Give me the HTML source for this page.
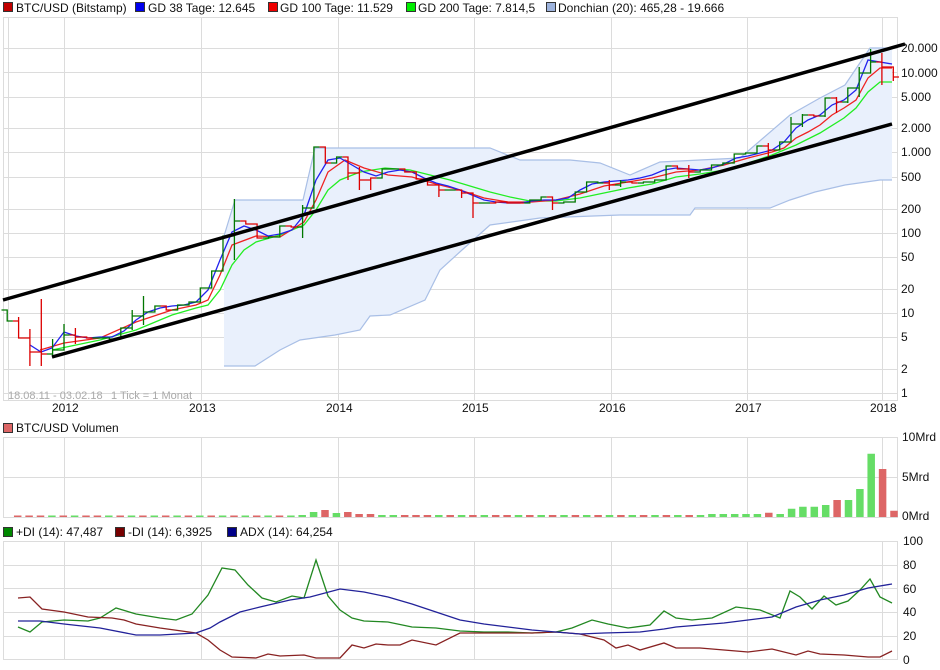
<!DOCTYPE html>
<html><head><meta charset="utf-8"><style>
html,body{margin:0;padding:0;background:#fff;}
svg{display:block;font-family:"Liberation Sans",sans-serif;}
</style></head><body>
<svg width="940" height="670" viewBox="0 0 940 670" xmlns="http://www.w3.org/2000/svg">
<rect width="940" height="670" fill="#fff"/>
<g font-size="12" fill="#111">
<rect x="3.5" y="2.5" width="9" height="9" fill="#c00000" stroke="#333"/><text x="16" y="12">BTC/USD (Bitstamp)</text>
<rect x="135.5" y="2.5" width="9" height="9" fill="#0000ee" stroke="#333"/><text x="148" y="12">GD 38 Tage: 12.645</text>
<rect x="268.5" y="2.5" width="9" height="9" fill="#ee0000" stroke="#333"/><text x="280" y="12">GD 100 Tage: 11.529</text>
<rect x="406.5" y="2.5" width="9" height="9" fill="#00ee00" stroke="#333"/><text x="418" y="12">GD 200 Tage: 7.814,5</text>
<rect x="546.5" y="2.5" width="9" height="9" fill="#9db3dd" stroke="#333"/><text x="558" y="12">Donchian (20): 465,28 - 19.666</text>
</g>
<g stroke="#dcdcdc" stroke-width="1">
<path d="M3 17.5H898M3 48.5H898M3 72.5H898M3 97.5H898M3 128.5H898M3 152.5H898M3 177.5H898M3 209.5H898M3 233.5H898M3 257.5H898M3 289.5H898M3 313.5H898M3 337.5H898M3 369.5H898M3 393.5H898M3 400.5H898"/>
<path d="M3.5 17V400M8.5 17V400M64.5 17V400M201.5 17V400M338.5 17V400M474.5 17V400M611.5 17V400M747.5 17V400M882.5 17V400M897.5 17V400"/>
</g>
<path d="M224 236L235 200L303 200L315 148L490 148L520 160L570 160L600 163L630 175L660 162L740 158L790 115L820 98L845 85L870 48L892 48L892 180L880 180L845 185L815 192L790 200L770 208L695 208L690 215L620 215L540 218L490 225L462 250L440 270L425 300L390 315L370 316L360 330L335 335L300 340L280 350L255 366L224 366Z" fill="#e9f0fc" stroke="none"/>
<path d="M224 236L235 200L303 200L315 148L490 148L520 160L570 160L600 163L630 175L660 162L740 158L790 115L820 98L845 85L870 48L892 48" fill="none" stroke="#a9bfe6" stroke-width="1.2"/>
<path d="M892 180L880 180L845 185L815 192L790 200L770 208L695 208L690 215L620 215L540 218L490 225L462 250L440 270L425 300L390 315L370 316L360 330L335 335L300 340L280 350L255 366L224 366" fill="none" stroke="#a9bfe6" stroke-width="1.2"/>
<polyline fill="none" stroke="#22ee22" stroke-width="1.3" points="52,350 100,340 136,330 172,315 196,308 208,305 220,290 232,265 244,250 256,242 280,235 304,225 316,210 328,190 340,180 360,172 385,168 410,170 430,175 450,180 470,186 490,192 510,197 530,201 556,201 580,198 604,193 628,188 652,184 676,177 700,174 724,170 748,163 772,155 796,145 820,133 844,118 856,108 868,92 880,82 892,82"/>
<polyline fill="none" stroke="#ee2222" stroke-width="1.3" points="40,350 64,343 100,338 136,322 172,310 196,305 208,300 220,275 232,245 256,236 280,237 304,222 316,200 328,172 345,160 364,168 388,175 412,177 436,184 460,190 484,198 508,202 532,202 556,200 580,194 604,186 628,182 652,178 676,172 700,170 724,165 748,158 772,152 784,148 796,138 808,132 820,125 832,115 844,108 856,100 868,78 880,68 892,68"/>
<polyline fill="none" stroke="#2222ee" stroke-width="1.3" points="30,345 41,352 52,348 64,332 76,336 88,338 100,337 112,337 124,331 136,320 148,312 160,308 172,306 184,305 196,302 208,290 220,260 232,232 244,226 256,230 268,236 280,234 292,230 304,215 316,180 328,160 340,158 352,165 364,172 376,176 388,172 400,170 412,172 424,178 436,183 448,186 460,190 472,195 484,200 496,202 508,203 520,203 532,201 544,200 556,200 568,198 580,190 592,184 604,182 616,181 628,180 640,178 652,175 664,170 676,168 688,169 700,170 712,168 724,164 736,158 748,156 760,153 772,150 784,142 796,128 808,120 820,115 832,105 844,100 856,90 868,60 880,62 892,64"/>
<path fill="none" stroke="#007700" stroke-width="1.3" d="M1.5 310H7.2V321H12.9M46.9 354H52.6V350H58.3M52.6 339V357M58.3 350H64V335H69.7M64 324V347M92.4 338H98.1V338H103.8M103.7 338H109.4V339H115.1M115.1 339H120.8V328H126.5M126.5 328H132.2V316H137.9M132.2 310V330M137.8 316H143.5V312H149.2M143.5 296V325M149.2 312H154.9V306H160.6M171.9 310H177.6V305H183.3M183.3 305H189V302H194.7M194.6 302H200.3V288H206M206 288H211.7V271H217.4M217.3 271H223V236H228.7M228.7 236H234.4V221H240.1M234.4 199V260M262.8 238H268.5V237H274.2M274.1 237H279.8V226H285.5M296.9 227H302.6V208H308.3M302.6 205V238M308.2 208H313.9V147H319.6M330.9 163H336.6V157H342.3M376.4 178H382.1V169H387.8M387.7 169H393.4V169H399.1M444.5 190H450.2V190H455.9M478.6 203H484.3V203H490M524.1 203H529.8V200H535.5M535.4 200H541.1V197H546.8M558.1 203H563.8V202H569.5M569.5 202H575.2V192H580.9M580.9 192H586.6V182H592.3M592.2 182H597.9V183H603.6M614.9 185H620.6V182H626.3M620.6 180V187M637.7 183H643.4V182H649.1M649 182H654.7V180H660.4M660.4 180H666.1V166H671.8M694.5 172H700.2V170H705.9M705.8 170H711.5V165H717.2M717.2 165H722.9V163H728.6M728.5 163H734.2V154H739.9M739.9 154H745.6V153H751.3M751.3 153H757V146H762.7M774 150H779.7V142H785.4M785.3 142H791V124H796.7M791 117V142M796.7 124H802.4V115H808.1M802.4 114V127M819.4 116H825.1V98H830.8M825.1 98V117M842.1 102H847.8V88H853.5M847.8 88V103M853.5 88H859.2V73H864.9M859.2 67V97M864.9 73H870.6V62H876.3M870.6 49V73"/>
<path fill="none" stroke="#dd0000" stroke-width="1.3" d="M12.9 321H18.6V338H24.3M18.6 317V338M24.2 338H29.9V352H35.6M29.9 329V366M35.6 352H41.3V354H47M41.3 299V366M69.7 335H75.4V337H81.1M75.4 328V344M81 337H86.7V338H92.4M160.5 306H166.2V310H171.9M240.1 221H245.8V224H251.5M251.4 224H257.1V238H262.8M285.5 226H291.2V227H296.9M319.6 147H325.3V163H331M342.3 157H348V173H353.7M348 160V180M353.7 173H359.4V180H365.1M359.4 167V190M365 180H370.7V178H376.4M370.7 178V190M399.1 169H404.8V172H410.5M410.5 172H416.2V179H421.9M421.8 179H427.5V185H433.2M433.2 185H438.9V190H444.6M438.9 190V197M455.9 190H461.6V193H467.3M461.6 193V198M467.3 193H473V203H478.7M473 198V218M490 203H495.7V202H501.4M501.3 202H507V203H512.7M512.7 203H518.4V203H524.1M546.8 197H552.5V203H558.2M552.5 197V210M603.6 183H609.3V185H615M609.3 180V190M626.3 182H632V183H637.7M671.7 166H677.4V169H683.1M683.1 169H688.8V172H694.5M688.8 165V178M762.6 146H768.3V150H774M768.3 143V157M808.1 115H813.8V116H819.5M830.8 98H836.5V102H842.2M836.5 97V113M876.2 62H881.9V67H887.6M881.9 53V85M887.6 67H893.3V77H899M893.3 73V81"/>
<path d="M3 300L905 44M52 357L892 124" stroke="#000" stroke-width="3.5" fill="none"/>
<g font-size="12" fill="#111">
<text x="901" y="52">20.000</text><text x="901" y="77">10.000</text><text x="901" y="101">5.000</text><text x="901" y="132">2.000</text><text x="901" y="156">1.000</text><text x="901" y="181">500</text><text x="901" y="213">200</text><text x="901" y="237">100</text><text x="901" y="261">50</text><text x="901" y="293">20</text><text x="901" y="317">10</text><text x="901" y="341">5</text><text x="901" y="373">2</text><text x="901" y="397">1</text>
<text x="52" y="412">2012</text><text x="189" y="412">2013</text><text x="326" y="412">2014</text><text x="462" y="412">2015</text><text x="599" y="412">2016</text><text x="735" y="412">2017</text><text x="870" y="412">2018</text>
</g>
<text x="8" y="399" font-size="11" fill="#aaa">18.08.11 - 03.02.18</text>
<text x="111" y="399" font-size="11" fill="#aaa">1 Tick = 1 Monat</text>
<g font-size="12" fill="#111">
<rect x="3.5" y="423.5" width="9" height="9" fill="#dd6666" stroke="#333"/><text x="16" y="432">BTC/USD Volumen</text>
<text x="902" y="441">10Mrd</text><text x="902" y="481">5Mrd</text><text x="902" y="520">0Mrd</text>
</g>
<g stroke="#dcdcdc"><path d="M3 437.5H898M3 477.5H898M3 517.5H898M3.5 437V517M64.5 437V517M201.5 437V517M338.5 437V517M474.5 437V517M611.5 437V517M747.5 437V517M882.5 437V517M897.5 437V517"/></g>
<path fill="none" stroke="#66dd66" stroke-width="7.5" d="M871.2 517V453.7M859.9 517V489M848.5 517V500M825.7 517V505M814.3 517V506.7M802.9 517V506.7M791.6 517V508.7M780.2 517V514M757.4 517V514M746 517V514M734.7 517V514M723.3 517V514M711.9 517V514M700.5 517V515M677.8 517V515M655 517V515M632.3 517V515M609.5 517V515M586.7 517V515M564 517V515M541.2 517V515M518.5 517V515M484.3 517V515M461.6 517V515M438.8 517V515M393.3 517V515M381.9 517V515M336.4 517V513M313.6 517V512M302.2 517V515M290.9 517V515.5M268.1 517V515.5M245.3 517V515.5M222.6 517V515.5M199.8 517V515.5M177.1 517V515.5M154.3 517V515.5M131.5 517V515.5M108.8 517V515.5M74.6 517V515.5M51.9 517V515.5"/>
<path fill="none" stroke="#dd6666" stroke-width="7.5" d="M894 517V510.7M882.6 517V469M837.1 517V500M768.8 517V512.7M689.2 517V515M666.4 517V515M643.6 517V515M620.9 517V515M598.1 517V515M575.4 517V515M552.6 517V515M529.8 517V515M507.1 517V515M495.7 517V515M472.9 517V515M450.2 517V515M427.4 517V515M416 517V515M404.7 517V515M370.5 517V514M359.1 517V514M347.8 517V512M325 517V510M279.5 517V515.5M256.7 517V515.5M234 517V515.5M211.2 517V515.5M188.4 517V515.5M165.7 517V515.5M142.9 517V515.5M120.2 517V515.5M97.4 517V515.5M86 517V515.5M63.3 517V515.5M40.5 517V515.5M29.1 517V515.5M17.7 517V515.5"/>
<g font-size="12" fill="#111">
<rect x="3.5" y="527.5" width="9" height="9" fill="#008800" stroke="#333"/><text x="16" y="536">+DI (14): 47,487</text>
<rect x="115.5" y="527.5" width="9" height="9" fill="#770000" stroke="#333"/><text x="128" y="536">-DI (14): 6,3925</text>
<rect x="227.5" y="527.5" width="9" height="9" fill="#000088" stroke="#333"/><text x="240" y="536">ADX (14): 64,254</text>
<text x="903" y="545">100</text><text x="903" y="569">80</text><text x="903" y="593">60</text><text x="903" y="616">40</text><text x="903" y="640">20</text><text x="903" y="664">0</text>
</g>
<g stroke="#dcdcdc"><path d="M3 541.5H898M3 565.5H898M3 588.5H898M3 612.5H898M3 636.5H898M3 659.5H898M3.5 541V660M64.5 541V660M201.5 541V660M338.5 541V660M474.5 541V660M611.5 541V660M747.5 541V660M882.5 541V660M897.5 541V660"/></g>
<polyline fill="none" stroke="#228822" stroke-width="1.3" points="18,627 30,632 42,622 64,620 88,621 100,618 116,608 136,614 160,618 176,620 192,614 208,595 222,568 235,570 248,585 262,598 276,602 292,596 304,598 316,560 328,596 340,610 352,618 364,621 388,622 412,627 436,628 460,631 484,632 508,632 532,633 556,632 572,628 592,620 608,624 628,628 650,625 664,611 676,618 692,620 712,618 736,607 760,610 780,618 790,591 800,597 812,609 824,596 836,605 848,601 860,590 870,579 880,597 892,603"/>
<polyline fill="none" stroke="#882222" stroke-width="1.3" points="18,598 30,597 42,609 64,612 88,617 112,618 124,620 136,624 160,628 196,633 208,640 220,650 232,657 256,658 268,654 280,656 304,655 316,658 340,658 352,645 364,648 376,644 388,645 400,645 412,640 436,645 460,633 484,633 508,633 532,633 556,632 580,634 604,640 616,648 628,645 640,650 664,643 676,648 700,648 724,650 748,652 772,649 796,655 808,651 820,654 844,655 868,657 880,657 892,651"/>
<polyline fill="none" stroke="#222299" stroke-width="1.3" points="18,621 40,621 64,624 100,628 136,635 160,635 196,633 210,628 220,622 240,612 260,607 290,600 310,597 340,589 364,592 388,597 412,604 436,612 460,620 484,624 508,627 532,630 556,632 580,634 604,633 640,632 664,629 676,627 700,625 724,623 748,620 772,617 796,607 820,600 844,595 868,588 892,584"/>
</svg>
</body></html>
